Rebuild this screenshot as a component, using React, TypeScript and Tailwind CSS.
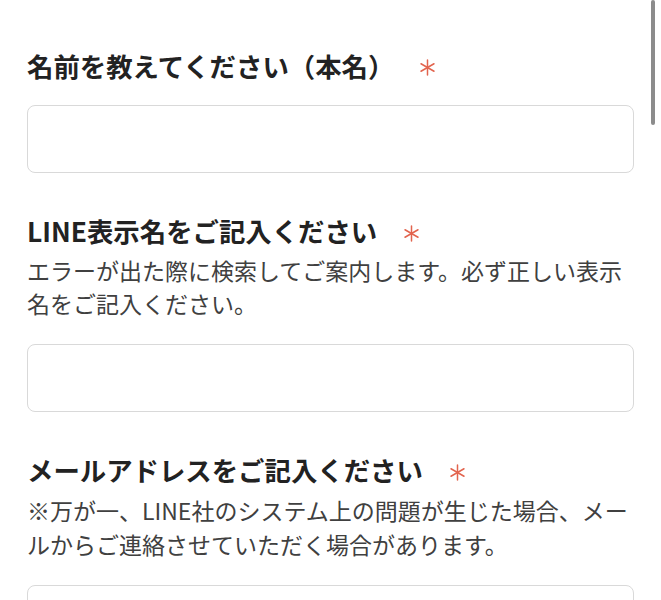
import React from "react";

const font = '"Noto Sans CJK JP", "Noto Sans", sans-serif';

function Asterisk() {
  return (
    <svg width="15" height="17" viewBox="0 0 15 17" className="shrink-0" aria-hidden>
      <g stroke="#e2644e" strokeWidth="1.5" strokeLinecap="round">
        <line x1="7.5" y1="1" x2="7.5" y2="16" />
        <line x1="1" y1="4.75" x2="14" y2="12.25" />
        <line x1="1" y1="12.25" x2="14" y2="4.75" />
      </g>
    </svg>
  );
}

function Title({ text, gap }: { text: string; gap: string }) {
  return (
    <div className="flex items-center h-[36px]">
      <span className="text-[26.4px] leading-[36px] font-bold text-[#222222] whitespace-nowrap">{text}</span>
      <span className={gap}>
        <Asterisk />
      </span>
    </div>
  );
}

function Field() {
  return <div className="h-[68px] w-full rounded-[8px] border-[1.5px] border-[#d9d9d9] bg-white" />;
}

export default function App() {
  return (
    <div className="relative min-h-[600px] bg-white overflow-hidden" style={{ fontFamily: font }}>
      <div className="absolute right-[6px] top-0 w-[4px] h-[125px] rounded-full bg-[#8c8c8c]" />
      <div className="px-[27px] pt-[48px] flex flex-col">
        <Title text="名前を教えてください（本名）" gap="ml-[26px] mt-[2px]" />
        <div className="mt-[21px]">
          <Field />
        </div>

        <div className="mt-[40px]">
          <Title text="LINE表示名をご記入ください" gap="ml-[27px] mt-[4px]" />
        </div>
        <div className="mt-[5px] text-[23px] leading-[33px] text-[#404040]">
          <div className="whitespace-nowrap">エラーが出た際に検索してご案内します。必ず正しい表示</div>
          <div className="whitespace-nowrap">名をご記入ください。</div>
        </div>
        <div className="mt-[24px]">
          <Field />
        </div>

        <div className="mt-[40px]">
          <Title text="メールアドレスをご記入ください" gap="ml-[27px] mt-[4px]" />
        </div>
        <div className="mt-[5px] text-[23px] leading-[34px] text-[#404040]">
          <div className="whitespace-nowrap">※万が一、LINE社のシステム上の問題が生じた場合、メー</div>
          <div className="whitespace-nowrap">ルからご連絡させていただく場合があります。</div>
        </div>
        <div className="mt-[24px]">
          <Field />
        </div>
      </div>
    </div>
  );
}
